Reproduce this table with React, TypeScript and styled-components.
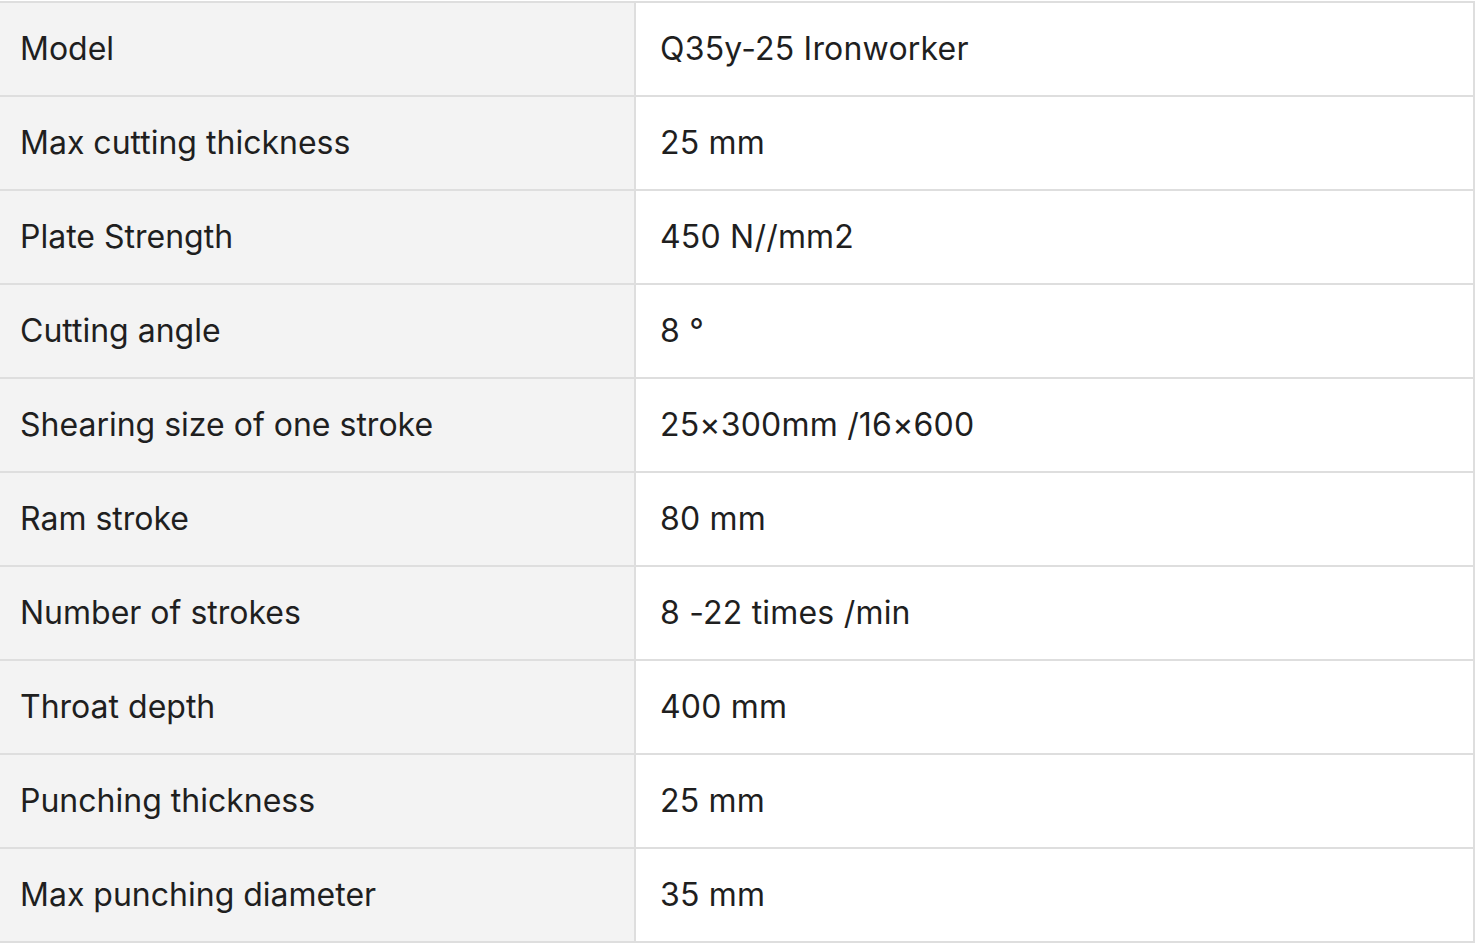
import React from "react";
import styled, { createGlobalStyle } from "styled-components";

const Global = createGlobalStyle`
  html, body { margin: 0; padding: 0; background: #ffffff; }
  body { font-family: Inter, "Noto Sans", sans-serif; color: #1f1f1f; }
`;

const Table = styled.div`
  margin-top: 1px;
  width: 1475px;
  box-sizing: border-box;
  border-top: 2px solid #dedede;
  border-right: 2px solid #dedede;
  display: flex;
  flex-direction: column;
`;

const Row = styled.div`
  display: grid;
  grid-template-columns: 636px 1fr;
  height: 94px;
  box-sizing: border-box;
  border-bottom: 2px solid #dedede;
`;

const Cell = styled.div<{ $label?: boolean }>`
  display: flex;
  align-items: center;
  box-sizing: border-box;
  padding-left: ${(p) => (p.$label ? "20px" : "24px")};
  padding-bottom: 2px;
  background: ${(p) => (p.$label ? "#f3f3f3" : "#ffffff")};
  border-right: ${(p) => (p.$label ? "2px solid #dedede" : "none")};
  font-size: 32px;
  letter-spacing: ${(p) => (p.$label ? "0" : "0.2px")};
  white-space: nowrap;
`;

const rows: [string, string][] = [
  ["Model", "Q35y-25 Ironworker"],
  ["Max cutting thickness", "25 mm"],
  ["Plate Strength", "450 N//mm2"],
  ["Cutting angle", "8 °"],
  ["Shearing size of one stroke", "25×300mm /16×600"],
  ["Ram stroke", "80 mm"],
  ["Number of strokes", "8 -22 times /min"],
  ["Throat depth", "400 mm"],
  ["Punching thickness", "25 mm"],
  ["Max punching diameter", "35 mm"],
];

export default function App() {
  return (
    <>
      <Global />
      <Table>
        {rows.map(([k, v]) => (
          <Row key={k}>
            <Cell $label>{k}</Cell>
            <Cell>{v}</Cell>
          </Row>
        ))}
      </Table>
    </>
  );
}
